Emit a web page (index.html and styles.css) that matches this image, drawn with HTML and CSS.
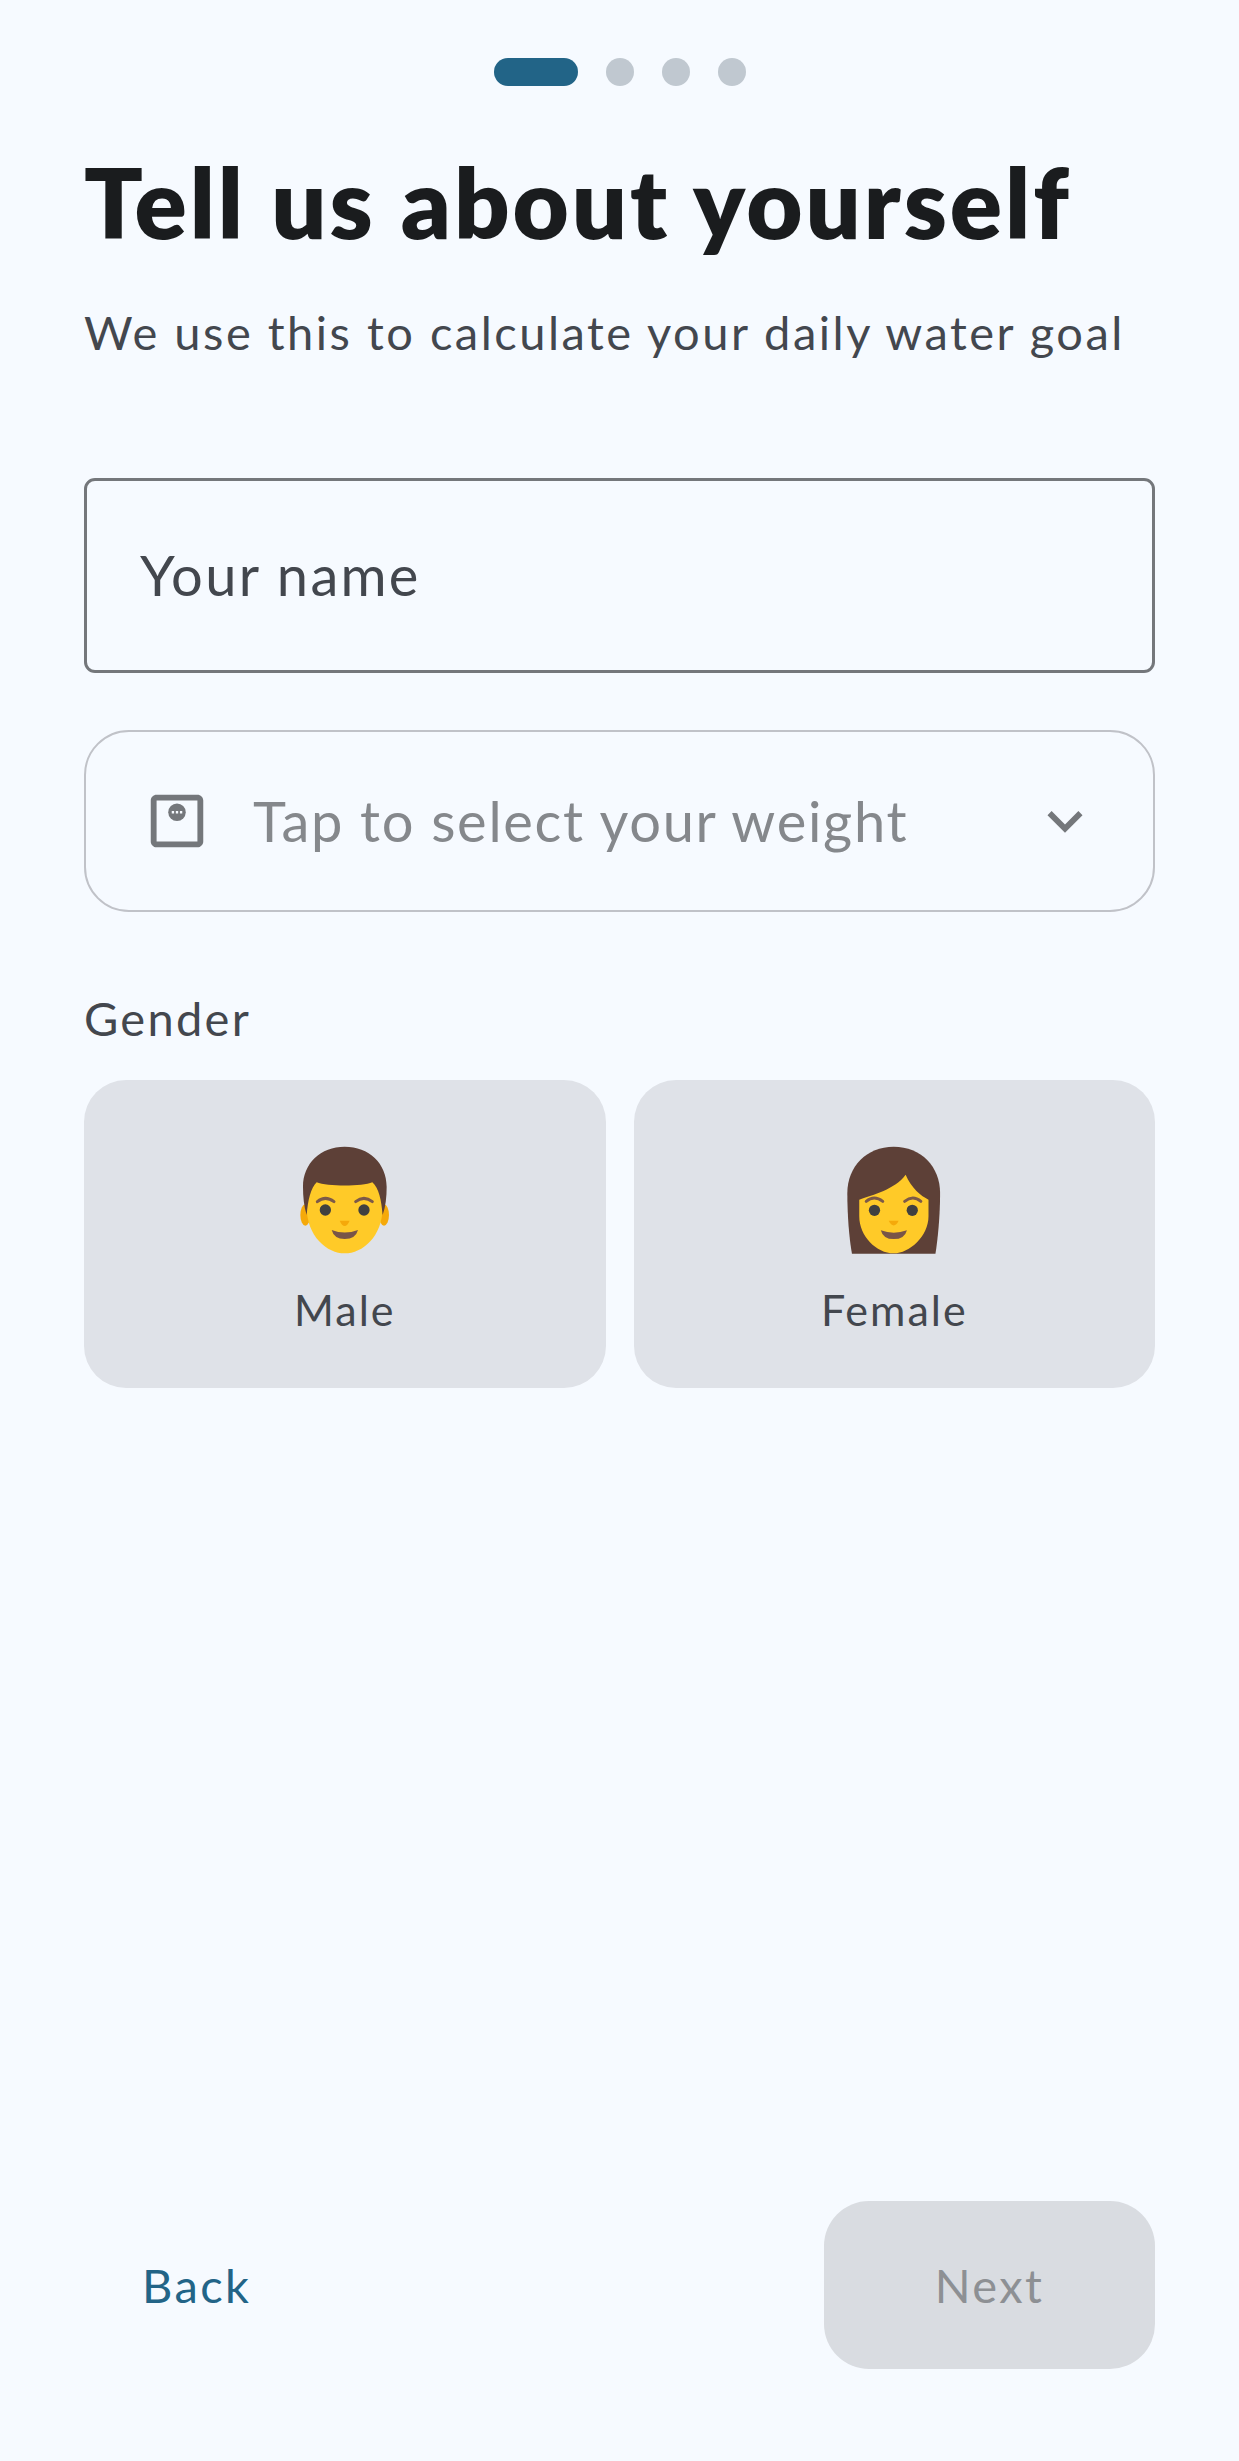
FILE: index.html
```html
<!DOCTYPE html>
<html>
<head>
  <meta charset="utf-8">
  <link rel="stylesheet" href="styles.css">
</head>
<body>
  <div class="screen">
    <!-- progress -->
    <div class="steps">
      <span class="step step-active"></span>
      <span class="step"></span>
      <span class="step"></span>
      <span class="step"></span>
    </div>

    <h1 class="title">Tell us about yourself</h1>
    <p class="subtitle">We use this to calculate your daily water goal</p>

    <div class="name-field">Your name</div>

    <div class="weight-field">
      <svg class="weight-icon" viewBox="0 0 24 24">
        <path fill="#74777b" d="M19 3H5c-1.1 0-2 .9-2 2v14c0 1.1.9 2 2 2h14c1.1 0 2-.9 2-2V5c0-1.1-.9-2-2-2zm0 16H5V5h14v14z"/>
        <circle cx="12" cy="9" r="3" fill="#74777b"/>
        <path fill="#f6faff" d="M10.2 8.6h.8v.8h-.8zM11.6 8.6h.8v.8h-.8zM13 8.6h.8v.8H13z"/>
      </svg>
      <span class="weight-text">Tap to select your weight</span>
      <svg class="chevron" viewBox="0 0 24 24">
        <path fill="#74777b" d="M16.59 8.59 12 13.17 7.41 8.59 6 10l6 6 6-6z"/>
      </svg>
    </div>

    <div class="gender-label">Gender</div>
    <div class="gender-row">
      <div class="gender-card">
        <svg class="emoji" viewBox="715 255 275 330">
          <ellipse cx="734" cy="465" rx="15" ry="32" fill="#f5a90a"/>
          <ellipse cx="970" cy="465" rx="15" ry="32" fill="#f5a90a"/>
          <path fill="#ffca28" d="M738 440C738 530 800 580 852 580C905 580 966 530 966 440C966 400 960 370 940 355L760 355C745 370 738 400 738 440Z"/>
          <path fill="#5d4037" d="M738 465C730 440 727 410 727 380C727 310 780 260 852 260C925 260 978 310 978 380C978 410 975 440 966 465C962 420 955 385 935 367C905 380 800 380 768 367C750 385 742 420 738 465Z"/>
          <path fill="none" stroke="#7d5a48" stroke-width="9" stroke-linecap="round" d="M770 425Q794 405 820 425M885 425Q910 405 935 425"/>
          <circle cx="794" cy="450" r="17" fill="#404040"/>
          <circle cx="910" cy="450" r="17" fill="#404040"/>
          <path fill="#f5a90a" d="M837 482H867Q860 498 852 498Q844 498 837 482Z"/>
          <path fill="#795548" d="M813 510Q852 525 892 510Q885 537 852 537Q820 537 813 510Z"/>
        </svg>
        <span class="gender-name">Male</span>
      </div>
      <div class="gender-card">
        <svg class="emoji" viewBox="678 255 290 332">
          <path fill="#5d4037" d="M696 583C688 540 682 470 682 400C682 320 740 260 822 260C905 260 962 320 962 400C962 470 955 540 948 583Z"/>
          <path fill="#ffca28" d="M718 420C760 405 825 390 858 345C875 385 905 410 927 420L927 470C927 530 870 582 822 582C770 582 718 530 718 470Z"/>
          <path fill="none" stroke="#7d5a48" stroke-width="9" stroke-linecap="round" d="M739 425Q763 405 789 425M855 425Q880 405 904 425"/>
          <circle cx="764" cy="452" r="17" fill="#404040"/>
          <circle cx="878" cy="452" r="17" fill="#404040"/>
          <path fill="#f5a90a" d="M807 484H837Q830 498 822 498Q814 498 807 484Z"/>
          <path fill="#795548" d="M783 512Q822 527 862 512Q855 539 822 539Q790 539 783 512Z"/>
        </svg>
        <span class="gender-name">Female</span>
      </div>
    </div>

    <div class="footer">
      <span class="back">Back</span>
      <span class="next">Next</span>
    </div>
  </div>
</body>
</html>
```

FILE: styles.css
```css
* {
  box-sizing: border-box;
}

body {
  margin: 0;
  background-color: #f6faff;
  font-family: "Lato", "Noto Sans", sans-serif;
  color: #43474e;
}

.screen {
  display: flex;
  flex-direction: column;
  min-height: 2461px;
  padding: 58px 84px 92px;
}

.steps {
  display: flex;
  justify-content: center;
  gap: 28px;
}

.step {
  width: 28px;
  height: 28px;
  border-radius: 50%;
  background: #c0c8d0;
}

.step-active {
  width: 84px;
  border-radius: 14px;
  background: #226487;
}

.title {
  margin: 50px 0 0;
  font-size: 97px;
  line-height: 132px;
  font-weight: 800;
  letter-spacing: 2.9px;
  color: #1a1c1e;
}

.subtitle {
  margin: 30px 0 0;
  font-size: 47px;
  line-height: 68px;
  letter-spacing: 2.5px;
  color: #43474e;
}

.name-field {
  display: flex;
  align-items: center;
  height: 195px;
  margin-top: 112px;
  padding: 0 53px 2px;
  border: 3px solid #74777b;
  border-radius: 11px;
  font-size: 56px;
  letter-spacing: 2.3px;
  color: #43474e;
}

.weight-field {
  display: flex;
  align-items: center;
  height: 182px;
  margin-top: 57px;
  padding: 0 56px;
  border: 2px solid #c0c2c8;
  border-radius: 45px;
}

.weight-icon {
  width: 70px;
  height: 70px;
}

.weight-text {
  flex: 1;
  margin: -2px 0 0 41px;
  font-size: 56px;
  letter-spacing: 1.7px;
  color: #85888c;
}

.chevron {
  width: 70px;
  height: 70px;
  margin-right: -3px;
}

.gender-label {
  margin-top: 75px;
  font-size: 47px;
  line-height: 62px;
  letter-spacing: 2.3px;
}

.gender-row {
  display: flex;
  gap: 28px;
  margin-top: 31px;
}

.gender-card {
  flex: 1;
  display: flex;
  flex-direction: column;
  align-items: center;
  height: 308px;
  border-radius: 42px;
  background: #dfe2e8;
}

.emoji {
  display: block;
  height: 110px;
  margin-top: 65px;
}

.gender-name {
  margin-top: 27px;
  font-size: 43px;
  line-height: 56px;
  letter-spacing: 2px;
}

.footer {
  display: flex;
  justify-content: space-between;
  align-items: center;
  margin-top: auto;
}

.back {
  padding-left: 58px;
  font-size: 47px;
  letter-spacing: 2.4px;
  color: #226487;
}

.next {
  display: flex;
  align-items: center;
  justify-content: center;
  width: 331px;
  height: 168px;
  border-radius: 45px;
  background: #d9dce1;
  font-size: 47px;
  letter-spacing: 2.4px;
  color: #8d9094;
}
```
